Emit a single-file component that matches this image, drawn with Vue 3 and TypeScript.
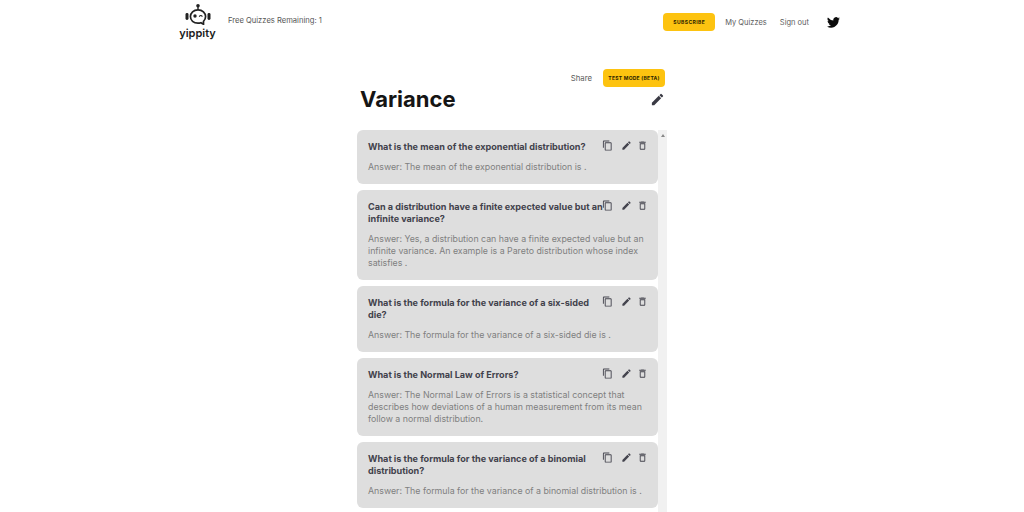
<script setup lang="ts">
interface Card {
  q: string;
  a: string;
}

const cards: Card[] = [
  { q: 'What is the mean of the exponential distribution?', a: 'Answer: The mean of the exponential distribution is .' },
  {
    q: 'Can a distribution have a finite expected value but an infinite variance?',
    a: 'Answer: Yes, a distribution can have a finite expected value but an infinite variance. An example is a Pareto distribution whose index satisfies .',
  },
  { q: 'What is the formula for the variance of a six-sided die?', a: 'Answer: The formula for the variance of a six-sided die is .' },
  {
    q: 'What is the Normal Law of Errors?',
    a: 'Answer: The Normal Law of Errors is a statistical concept that describes how deviations of a human measurement from its mean follow a normal distribution.',
  },
  { q: 'What is the formula for the variance of a binomial distribution?', a: 'Answer: The formula for the variance of a binomial distribution is .' },
];
</script>

<template>
  <div class="page">
    <header class="nav">
      <div class="logo">
        <svg class="bot" width="28" height="21" viewBox="0 0 28 21">
          <circle cx="14" cy="1.8" r="1.8" fill="#222" />
          <path d="M14 3v3" stroke="#222" stroke-width="1.4" />
          <path d="M14 5.8c-4.4 0-7.6 3-7.6 6.8s3.2 6.6 7.6 6.6c1 0 2-.2 2.9-.5l2.6 1.6v-3c1.3-1.2 2.1-2.9 2.1-4.7 0-3.8-3.2-6.8-7.6-6.8z" fill="none" stroke="#222" stroke-width="1.7" />
          <rect x="1.5" y="9" width="3" height="7" rx="1.4" fill="#222" />
          <rect x="23.5" y="9" width="3" height="7" rx="1.4" fill="#222" />
          <circle cx="11" cy="12" r="1.7" fill="#222" />
          <path d="M15.2 12.6q1.7-2.2 3.2 0" fill="none" stroke="#222" stroke-width="1.2" />
        </svg>
        <span class="logo-text">yippity</span>
      </div>
      <span class="remaining">Free Quizzes Remaining: 1</span>
      <div class="nav-right">
        <button class="btn sub">SUBSCRIBE</button>
        <a class="link quizzes">My Quizzes</a>
        <a class="link">Sign out</a>
        <svg class="tw" width="13" height="11" viewBox="0 0 24 20">
          <path fill="#0b0b0b" d="M24 2.4a9.8 9.8 0 0 1-2.8.8A4.9 4.9 0 0 0 23.3.5a9.8 9.8 0 0 1-3.1 1.2 4.9 4.9 0 0 0-8.4 4.5A14 14 0 0 1 1.7.9a4.9 4.9 0 0 0 1.5 6.6 4.9 4.9 0 0 1-2.2-.6v.1a4.9 4.9 0 0 0 3.9 4.8 4.9 4.9 0 0 1-2.2.1 4.9 4.9 0 0 0 4.6 3.4A9.9 9.9 0 0 1 0 17.3 14 14 0 0 0 7.5 19.5c9.1 0 14-7.5 14-14v-.6A10 10 0 0 0 24 2.4z" />
        </svg>
      </div>
    </header>

    <main class="main">
      <div class="actions">
        <a class="share">Share</a>
        <button class="btn test">TEST MODE (BETA)</button>
      </div>
      <div class="title-row">
        <h1>Variance</h1>
        <svg width="15" height="15" viewBox="0 0 24 24">
          <path fill="#3a3a44" d="M3 17.25V21h3.75L17.81 9.94l-3.75-3.75L3 17.25zM20.71 7.04a1 1 0 0 0 0-1.41l-2.34-2.34a1 1 0 0 0-1.41 0l-1.83 1.83 3.75 3.75 1.83-1.83z" />
        </svg>
      </div>

      <div class="list-wrap">
        <div class="list">
          <article v-for="c in cards" :key="c.q" class="card">
            <h2>{{ c.q }}</h2>
            <p>{{ c.a }}</p>
            <div class="tools">
              <svg width="11" height="11" viewBox="0 0 24 24">
                <path fill="#44444e" d="M16 1H4a2 2 0 0 0-2 2v14h2V3h12V1zm3 4H8a2 2 0 0 0-2 2v14a2 2 0 0 0 2 2h11a2 2 0 0 0 2-2V7a2 2 0 0 0-2-2zm0 16H8V7h11v14z" />
              </svg>
              <svg width="11" height="11" viewBox="0 0 24 24">
                <path fill="#44444e" d="M3 17.25V21h3.75L17.81 9.94l-3.75-3.75L3 17.25zM20.71 7.04a1 1 0 0 0 0-1.41l-2.34-2.34a1 1 0 0 0-1.41 0l-1.83 1.83 3.75 3.75 1.83-1.83z" />
              </svg>
              <svg width="11" height="11" viewBox="0 0 24 24">
                <path fill="#44444e" d="M6 19a2 2 0 0 0 2 2h8a2 2 0 0 0 2-2V7H6v12zM8 9h8v10H8V9zm7.5-5-1-1h-5l-1 1H5v2h14V4h-3.5z" />
              </svg>
            </div>
          </article>
        </div>
        <div class="rail"><span class="arrow"></span></div>
      </div>
    </main>
  </div>
</template>

<style>
html, body {
  margin: 0;
  background: #fff;
  overflow: hidden;
}
</style>

<style scoped>
.page {
  width: 1024px;
  height: 512px;
  overflow: hidden;
  font-family: Inter, "Open Sans", sans-serif;
  color: #33333d;
}
.nav {
  display: flex;
  align-items: flex-start;
  padding: 4px 184px 0 180px;
  height: 65px;
  box-sizing: border-box;
}
.logo {
  width: 35px;
  display: flex;
  flex-direction: column;
  align-items: center;
}
.bot {
  display: block;
}
.logo-text {
  font-size: 11px;
  font-weight: 600;
  line-height: 12px;
  margin-top: 2px;
  color: #1a1a1a;
}
.remaining {
  margin: 12px 0 0 13px;
  font-size: 7.6px;
  line-height: 10px;
  color: #555;
}
.nav-right {
  margin-left: auto;
  display: flex;
  align-items: center;
  height: 18px;
  margin-top: 9px;
}
.btn {
  border: 0;
  background: #fdc310;
  border-radius: 4px;
  font-family: inherit;
  font-weight: 700;
  color: #2b2300;
  padding: 0;
}
.sub {
  width: 52px;
  height: 18px;
  font-size: 5px;
  letter-spacing: 0.4px;
  margin-right: 10px;
}
.link {
  font-size: 7.5px;
  color: #5c5c5c;
}
.quizzes {
  margin-right: 13px;
}
.tw {
  margin-left: 18px;
}
.main {
  width: 310px;
  margin-left: 357px;
}
.actions {
  display: flex;
  justify-content: flex-end;
  align-items: center;
  gap: 11px;
  padding-right: 2px;
  height: 18px;
  margin-top: 4px;
}
.share {
  font-size: 7.8px;
  color: #5c5c5c;
}
.test {
  width: 62px;
  height: 18px;
  font-size: 5px;
  letter-spacing: 0.25px;
}
.title-row {
  display: flex;
  justify-content: space-between;
  align-items: center;
  padding: 0 2px;
  height: 26px;
  margin-top: -1px;
}
h1 {
  margin: 0 0 0 1px;
  font-size: 22px;
  font-weight: 700;
  color: #151515;
}
.list-wrap {
  display: flex;
  margin-top: 18px;
  height: 382px;
}
.list {
  width: 301px;
  display: flex;
  flex-direction: column;
  gap: 6px;
}
.card {
  position: relative;
  background: #dedede;
  border-radius: 6px;
  padding: 11px 11px 11px;
}
h2 {
  margin: 0;
  width: 238px;
  font-size: 9.1px;
  line-height: 12px;
  font-weight: 700;
  color: #42424c;
}
.tools {
  position: absolute;
  top: 10px;
  right: 10px;
  display: flex;
  gap: 5px;
}
.tools svg:first-child {
  margin-right: 3px;
}
p {
  margin: 8px 0 0;
  font-size: 8.8px;
  line-height: 12px;
  color: #808080;
}
.rail {
  width: 9px;
  background: #f1f1f1;
  position: relative;
}
.arrow {
  position: absolute;
  top: 4px;
  left: 3px;
  border: 2px solid transparent;
  border-top: 0;
  border-bottom: 3px solid #888;
}
</style>
